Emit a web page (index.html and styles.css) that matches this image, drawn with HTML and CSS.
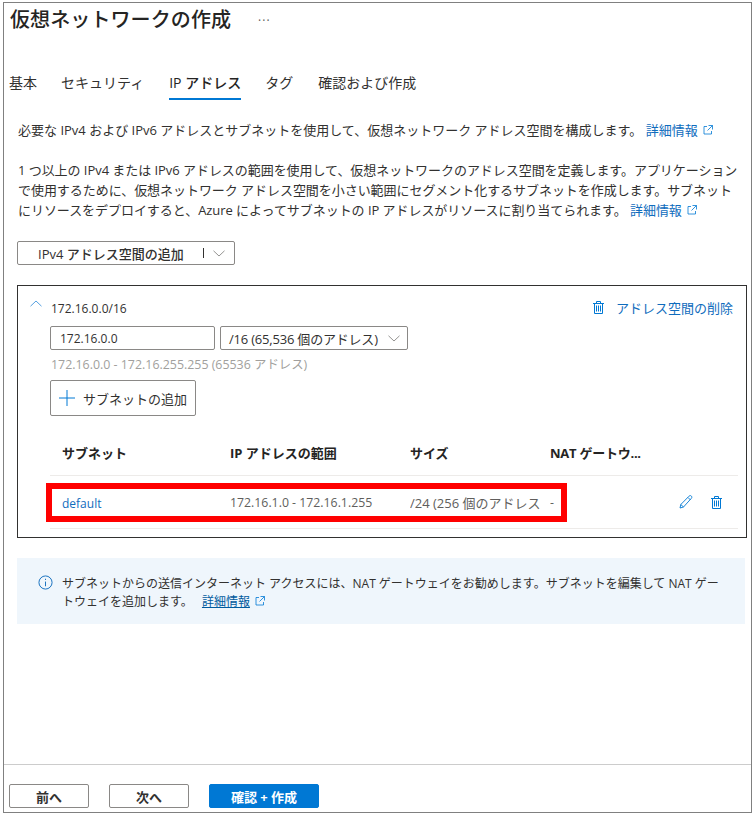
FILE: index.html
```html
<!DOCTYPE html>
<html lang="ja">
<head>
<meta charset="utf-8">
<title>仮想ネットワークの作成</title>
<link rel="stylesheet" href="styles.css">
</head>
<body>
<div class="frame">
  <main class="main">
    <header class="title-row">
      <h1 class="title">仮想ネットワークの作成</h1>
      <span class="more">···</span>
    </header>
    <nav class="tabs">
      <span class="tab">基本</span>
      <span class="tab">セキュリティ</span>
      <span class="tab active">IP アドレス</span>
      <span class="tab">タグ</span>
      <span class="tab">確認および作成</span>
    </nav>
    <div class="content">
      <p class="para">必要な IPv4 および IPv6 アドレスとサブネットを使用して、仮想ネットワーク アドレス空間を構成します。 <a class="link">詳細情報</a>
        <svg class="ext" viewBox="0 0 10 10"><path d="M4 1.500H1v7.500h7.500V6M5.500.5h4v4M9.500.5L4.500 5.500" fill="none" stroke="#0078d4" stroke-width=".8"/></svg></p>
      <p class="para para-long">1 つ以上の IPv4 または IPv6 アドレスの範囲を使用して、仮想ネットワークのアドレス空間を定義します。アプリケーションで使用するために、仮想ネットワーク アドレス空間を小さい範囲にセグメント化するサブネットを作成します。サブネットにリソースをデプロイすると、Azure によってサブネットの IP アドレスがリソースに割り当てられます。 <a class="link">詳細情報</a>
        <svg class="ext" viewBox="0 0 10 10"><path d="M4 1.500H1v7.500h7.500V6M5.500.5h4v4M9.500.5L4.500 5.500" fill="none" stroke="#0078d4" stroke-width=".8"/></svg></p>
      <div class="add-space">
        <span class="add-space-label">IPv4 アドレス空間の追加</span>
        <span class="add-space-sep"></span>
        <svg class="chev" viewBox="0 0 12 7"><path d="M.5.8L6 6l5.500-5.200" fill="none" stroke="#797775" stroke-width=".8"/></svg>
      </div>
      <section class="space">
        <div class="space-head">
          <svg class="chev-up" viewBox="0 0 12 7"><path d="M.5 6.200L6 1l5.500 5.200" fill="none" stroke="#2b88d8" stroke-width=".8"/></svg>
          <span class="space-name">172.16.0.0/16</span>
          <span class="space-del">
            <svg class="trash" viewBox="0 0 11 13"><path d="M0 2.500h11M3.500 2.500V.5h4v2M1.500 2.500v10h8v-10M3.500 4.500v6M5.500 4.500v6M7.500 4.500v6" fill="none" stroke="#0078d4" stroke-width="1"/></svg>
            アドレス空間の削除
          </span>
        </div>
        <div class="fields">
          <div class="input">172.16.0.0</div>
          <div class="select">/16 (65,536 個のアドレス)
            <svg class="chev chev-select" viewBox="0 0 12 7"><path d="M.5.8L6 6l5.500-5.200" fill="none" stroke="#797775" stroke-width=".8"/></svg>
          </div>
        </div>
        <div class="hint">172.16.0.0 - 172.16.255.255 (65536 アドレス)</div>
        <div class="add-subnet">
          <svg class="plus" viewBox="0 0 16 16"><path d="M8 0v16M0 8h16" fill="none" stroke="#0078d4" stroke-width="1"/></svg>
          サブネットの追加
        </div>
        <div class="thead">
          <span class="th c1">サブネット</span>
          <span class="th c2">IP アドレスの範囲</span>
          <span class="th c3">サイズ</span>
          <span class="th c4">NAT ゲートウ...</span>
        </div>
        <div class="trow">
          <div class="highlight">
            <span class="td c1 link">default</span>
            <span class="td c2">172.16.1.0 - 172.16.1.255</span>
            <span class="td c3">/24 (256 個のアドレス</span>
            <span class="td c4">-</span>
          </div>
          <div class="actions">
            <svg class="pencil" viewBox="0 0 14 14"><path d="M1 13l.8-3.500L10 1.200c.8-.8 1.800-.8 2.400-.1s.6 1.700-.2 2.400L4.500 12zM9 2.500L11.500 5M1.800 9.500l2.700 2.500" fill="none" stroke="#0078d4" stroke-width=".9"/></svg>
            <svg class="trash" viewBox="0 0 11 13"><path d="M0 2.500h11M3.500 2.500V.5h4v2M1.500 2.500v10h8v-10M3.500 4.500v6M5.500 4.500v6M7.500 4.500v6" fill="none" stroke="#0078d4" stroke-width="1"/></svg>
          </div>
        </div>
      </section>
      <aside class="info">
        <svg class="info-icon" viewBox="0 0 16 16"><circle cx="8" cy="8" r="7" fill="none" stroke="#0f6cbd" stroke-width="1"/><path d="M8 7v5M8 4v1.300" fill="none" stroke="#0f6cbd" stroke-width="1"/></svg>
        <p class="info-text">サブネットからの送信インターネット アクセスには、NAT ゲートウェイをお勧めします。サブネットを編集して NAT ゲートウェイを追加します。 <a class="info-link">詳細情報</a>
          <svg class="ext" viewBox="0 0 10 10"><path d="M4 1.500H1v7.500h7.500V6M5.500.5h4v4M9.500.5L4.500 5.500" fill="none" stroke="#0078d4" stroke-width=".8"/></svg></p>
      </aside>
    </div>
  </main>
  <footer class="footer">
    <button class="btn">前へ</button>
    <button class="btn">次へ</button>
    <button class="btn primary">確認 + 作成</button>
  </footer>
</div>
</body>
</html>
```
FILE: styles.css
```css
* { box-sizing: border-box; }
html, body { margin: 0; padding: 0; background: #fff; }
body {
  font-family: "Open Sans", "Noto Sans CJK JP", sans-serif;
  font-size: 13px;
  color: #323130;
  padding: 2px 3px 2px;
}
.frame {
  width: 749px;
  height: 811px;
  border: 1px solid #808080;
  display: flex;
  flex-direction: column;
}
.main { flex: 1; min-height: 0; }
.title-row { display: flex; align-items: center; height: 34px; padding-left: 6px; }
.title { margin: 0; font-size: 20px; font-weight: 500; line-height: 34px; color: #252423; letter-spacing: .1px; }
.more { margin-left: 27px; font-size: 12px; color: #605e5c; letter-spacing: 1px; }
.tabs { display: flex; margin-top: 27px; padding-left: 5px; gap: 24px; height: 36px; }
.tab { font-size: 14px; line-height: 37px; height: 36px; }
.tab.active { font-weight: 500; border-bottom: 2px solid #0078d4; color: #252423; margin-left: 1px; }
.tab:last-child { margin-left: 1px; }
.content { padding-left: 13px; }
.para { margin: 0; line-height: 20px; padding-left: 1px; width: 724px; }
.para:first-child { margin-top: 20px; }
.para-long { margin-top: 20px; letter-spacing: -.05px; }
.link { color: #0f6cbd; }
.ext { width: 10px; height: 10px; margin-left: 2px; }
.add-space {
  margin-top: 21px; width: 218px; height: 24px;
  border: 1px solid #8a8886; border-radius: 2px;
  display: flex; align-items: center; padding-left: 20px;
}
.add-space-label { font-weight: 500; width: 165px; white-space: nowrap; }
.add-space-sep { width: 1px; height: 10px; background: #323130; }
.chev { width: 12px; height: 7px; margin-left: 9px; }
.space {
  margin-top: 20px; width: 730px; height: 253px;
  border: 1px solid #323130;
  padding: 12px 0 0 32px;
}
.space-head { display: flex; align-items: center; height: 20px; padding-right: 13px; }
.chev-up { width: 12px; height: 7px; margin-left: -20px; margin-top: -9px; }
.space-name { font-size: 12px; margin-left: 9px; flex: 1; }
.space-del { color: #0f6cbd; display: flex; align-items: center; gap: 12px; margin-top: -2px; }
.trash { width: 11px; height: 13px; }
.fields { display: flex; gap: 5px; margin-top: 8px; }
.input, .select {
  height: 24px; border: 1px solid #8a8886; border-radius: 2px;
  display: flex; align-items: center; padding-left: 8px; white-space: nowrap;
}
.input { width: 165px; font-size: 12px; padding-left: 9px; }
.select { width: 188px; font-size: 13px; letter-spacing: -.2px; }
.chev-select { margin-left: 10px; }
.hint { color: #a19f9d; font-size: 12.4px; line-height: 18px; margin-top: 6px; padding-left: 1px; }
.add-subnet {
  margin-top: 6px; width: 146px; height: 36px;
  border: 1px solid #8a8886; border-radius: 2px;
  display: flex; align-items: center; gap: 8px; padding-left: 8px;
}
.plus { width: 16px; height: 16px; }
.thead, .highlight { display: grid; grid-template-columns: 168px 180px 140px 1fr; }
.thead {
  width: 688px; height: 60px; padding: 27px 0 0 12px;
  border-bottom: 1px solid #edebe9; margin-bottom: 7px;
}
.th { font-weight: 700; font-size: 13px; line-height: 20px; white-space: nowrap; color: #252423; }
.th.c4 { letter-spacing: -.25px; }
.trow {
  display: flex; align-items: center; justify-content: space-between;
  width: 688px; height: 46px; padding-bottom: 7px;
  border-bottom: 1px solid #edebe9;
}
.highlight {
  width: 521px; height: 39px; margin-left: -4px;
  border: 6px solid #f00; padding-left: 10px; align-items: center;
}
.td { font-size: 12.3px; white-space: nowrap; overflow: hidden; color: #605e5c; }
.td.link { color: #0f6cbd; font-size: 12px; padding-top: 2px; }
.td.c3 { font-size: 13px; }
.actions { display: flex; align-items: center; gap: 18px; padding-right: 16px; }
.pencil { width: 14px; height: 14px; }
.info {
  margin-top: 20px; width: 728px; height: 66px; background: #eff6fc;
  display: flex; padding: 17px 12px 0 21px; gap: 9px;
}
.info-icon { width: 15px; height: 15px; flex: none; }
.info-text { margin: 0; font-size: 12px; line-height: 18px; width: 662px; }
.info-link { color: #005a9e; text-decoration: underline; margin-left: 6px; }
.footer {
  flex: none; height: 48px; border-top: 1px solid #ccc;
  display: flex; gap: 20px; padding: 19px 0 0 5px;
}
.btn {
  font: 700 13px "Open Sans", "Noto Sans CJK JP", sans-serif;
  width: 80px; height: 24px; padding: 0; background: #fff; color: #323130;
  border: 1px solid #8a8886; border-radius: 2px;
}
.btn.primary { width: 110px; background: #0078d4; border-color: #0078d4; color: #fff; }
```
